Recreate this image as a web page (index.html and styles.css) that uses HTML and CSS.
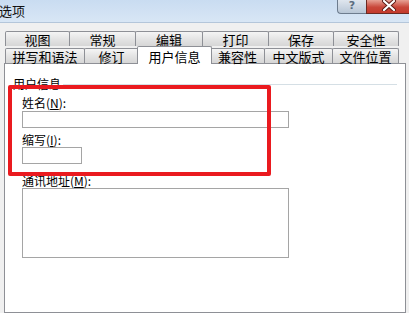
FILE: index.html
```html
<!DOCTYPE html>
<html lang="zh">
<head>
<meta charset="utf-8">
<title>选项</title>
<link rel="stylesheet" href="styles.css">
</head>
<body>
<div class="window">
  <div class="titlebar">
    <span class="title">选项</span>
    <div class="caption-buttons">
      <div class="btn-help">?</div>
      <div class="btn-close">
        <svg width="16" height="11" viewBox="0 0 16 11"><path d="M3 1 L13 10 M13 1 L3 10" stroke="#5a1a14" stroke-width="4" stroke-linecap="round"/><path d="M3 1 L13 10 M13 1 L3 10" stroke="#ffffff" stroke-width="2.2" stroke-linecap="round"/></svg>
      </div>
    </div>
  </div>
  <div class="body">
    <div class="tabrow row1">
      <div class="tab" style="width:65px">视图</div>
      <div class="tab" style="width:67px">常规</div>
      <div class="tab" style="width:68px">编辑</div>
      <div class="tab" style="width:67px">打印</div>
      <div class="tab" style="width:66px">保存</div>
      <div class="tab" style="width:66px">安全性</div>
    </div>
    <div class="tabrow row2">
      <div class="tab" style="width:80px">拼写和语法</div>
      <div class="tab" style="width:55px">修订</div>
      <div class="tab active" style="width:75px">用户信息</div>
      <div class="tab" style="width:55px">兼容性</div>
      <div class="tab" style="width:69px">中文版式</div>
      <div class="tab" style="width:67px">文件位置</div>
    </div>
    <div class="panel">
      <div class="group-head">
        <span class="group-label">用户信息</span>
        <span class="group-line"></span>
      </div>
      <div class="fields">
        <div class="label l-name">姓名(<u>N</u>):</div>
        <div class="input wide"></div>
        <div class="label l-abbr">缩写(<u>I</u>):</div>
        <div class="input short"></div>
        <div class="label l-addr">通讯地址(<u>M</u>):</div>
        <div class="textarea"></div>
      </div>
      <div class="highlight"></div>
    </div>
  </div>
</div>
</body>
</html>
```
FILE: styles.css
```css
* { box-sizing: border-box; }
html, body { margin: 0; padding: 0; }
body {
  width: 409px;
  height: 313px;
  overflow: hidden;
  background: #f0f0f0;
  font-family: "Noto Sans CJK SC", "Noto Sans", sans-serif;
  color: #000;
}
.window { width: 409px; height: 313px; display: flex; flex-direction: column; }
.titlebar {
  height: 23px;
  flex: none;
  display: flex;
  justify-content: space-between;
  align-items: flex-start;
  background: linear-gradient(#c9dcf1, #d8e6f5);
  border-bottom: 1px solid #b4c6da;
}
.title {
  font-size: 13px;
  line-height: 15px;
  margin-top: 3px;
  margin-left: -1px;
  color: #111;
}
.caption-buttons { display: flex; margin-right: -3px; }
.btn-help {
  width: 29px;
  height: 14px;
  border: 1px solid #6d7c8e;
  border-top: none;
  border-right: none;
  border-bottom-left-radius: 4px;
  background: linear-gradient(#dfe6ee, #b8c6d6);
  color: #5a6c80;
  font-family: "DejaVu Sans", sans-serif;
  font-size: 11px;
  line-height: 12px;
  text-align: center;
  font-weight: bold;
}
.btn-close {
  width: 46px;
  height: 14px;
  border: 1px solid #6b2a22;
  border-top: none;
  background: linear-gradient(#e7a295, #c9473a 55%, #c33a2c);
  display: flex;
  justify-content: center;
  align-items: flex-start;
}
.body {
  flex: 1;
  padding: 8px 4px 0 4px;
  display: flex;
  flex-direction: column;
}
.tabrow { display: flex; padding-left: 1px; flex: none; }
.row1 { height: 15px; }
.row2 { height: 17px; align-items: flex-end; position: relative; z-index: 2; }
.tab {
  height: 15px;
  flex: none;
  border: 1px solid #8e9096;
  border-bottom: none;
  margin-right: -1px;
  border-radius: 2px 2px 0 0;
  background: linear-gradient(#f5f5f5, #e4e4e4 50%, #d6d6d6);
  font-size: 13px;
  line-height: 13px;
  padding-top: 1px;
  text-align: center;
  color: #000;
  white-space: nowrap;
}
.row2 .tab.active {
  height: 18px;
  margin-bottom: -1px;
  margin-left: -1px;
  margin-right: -2px;
  background: #fff;
  padding-top: 3px;
  position: relative;
}
.panel {
  flex: 1;
  background: #fff;
  border: 1px solid #8e9096;
  padding: 13px 8px 0 8px;
  position: relative;
  width: 402px;
}
.group-head {
  display: flex;
  align-items: center;
  height: 14px;
}
.group-label {
  font-size: 12px;
  line-height: 14px;
  color: #000;
  padding-right: 2px;
}
.group-line {
  flex: 1;
  height: 1px;
  background: #d5dfe5;
}
.fields {
  padding-left: 9px;
  display: flex;
  flex-direction: column;
}
.label {
  font-size: 12px;
  line-height: 14px;
  height: 14px;
  color: #000;
}
.label u { text-decoration: underline; text-underline-offset: 1px; }
.l-name { margin-top: 5px; margin-bottom: 1px; }
.l-abbr { margin-top: 5px; }
.l-addr { margin-top: 10px; }
.input {
  height: 17px;
  border: 1px solid #a5a5a5;
  background: #fff;
}
.wide { width: 267px; }
.short { width: 60px; }
.textarea {
  width: 267px;
  height: 70px;
  border: 1px solid #a5a5a5;
}
.highlight {
  position: absolute;
  left: 3px;
  top: 21px;
  width: 263px;
  height: 91px;
  border: 4px solid #ea1a1f;
  border-radius: 2px;
  pointer-events: none;
}
```
